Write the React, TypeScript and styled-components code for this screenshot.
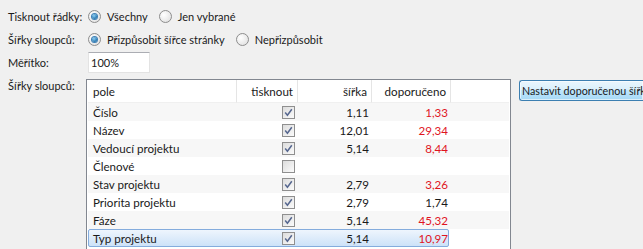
import React from "react";
import styled, { createGlobalStyle } from "styled-components";

const Global = createGlobalStyle`
  html, body { margin: 0; padding: 0; background: #f0f0f0; }
  body { font-family: Lato, "Noto Sans", sans-serif; font-size: 11.6px; color: #1a1a1a; overflow: hidden; }
`;

const Page = styled.div`
  padding: 5px 0 0 8px;
  width: 643px;
  height: 249px;
  box-sizing: border-box;
  overflow: hidden;
`;

const FormRow = styled.div<{ $h: number }>`
  display: grid;
  grid-template-columns: 80px 1fr;
  align-items: center;
  height: ${(p) => p.$h}px;
`;

const Label = styled.span`
  white-space: nowrap;
  font-size: 11px;
`;

const Options = styled.div`
  display: flex;
  align-items: center;
  gap: 11px;
  font-size: 11px;
`;

const RadioLabel = styled.label`
  display: flex;
  align-items: center;
  gap: 6px;
  white-space: nowrap;
`;

const RadioCircle = styled.span<{ $on?: boolean }>`
  width: 11px;
  height: 11px;
  border-radius: 50%;
  border: 1px solid #8d8d8d;
  background: radial-gradient(circle at 35% 35%, #ffffff, #dcdcdc);
  display: flex;
  align-items: center;
  justify-content: center;
  &::after {
    content: "";
    display: ${(p) => (p.$on ? "block" : "none")};
    width: 5px;
    height: 5px;
    border-radius: 50%;
    background: radial-gradient(circle at 40% 35%, #8fd0f5, #1c6ea8 75%);
    box-shadow: 0 0 0 1px #3d7fb6;
  }
`;

const Radio = ({ on, children }: { on?: boolean; children: React.ReactNode }) => (
  <RadioLabel>
    <RadioCircle $on={on} />
    {children}
  </RadioLabel>
);

const Input = styled.div`
  width: 58px;
  height: 19px;
  background: #fff;
  border: 1px solid #e3e3e3;
  border-top-color: #abadb3;
  box-sizing: content-box;
  display: flex;
  align-items: center;
  padding-left: 2px;
  font-size: 11px;
`;

const TableArea = styled.div`
  display: grid;
  grid-template-columns: 80px 423px 1fr;
  align-items: start;
  margin-top: 6px;
`;

const Table = styled.div`
  margin-left: -2px;
  border: 1px solid #828790;
  border-bottom: none;
  background: #fff;
  height: 200px;
  padding: 0 1px;
`;

const COLS = "149px 61px 74px 79px 1fr";

const HeadRow = styled.div`
  display: grid;
  grid-template-columns: ${COLS};
  height: 23px;
  background: #fff;
`;

const HeadCell = styled.div<{ $right?: boolean }>`
  border-right: 1px solid #e5e5e5;
  border-bottom: 1px solid #f0f0f0;
  display: flex;
  align-items: center;
  justify-content: ${(p) => (p.$right ? "flex-end" : "flex-start")};
  padding: 0 4px 0 5px;
  &:last-child { border-right: none; }
`;

const Row = styled.div<{ $alt?: boolean }>`
  display: grid;
  grid-template-columns: ${COLS};
  height: 18px;
  background: ${(p) => (p.$alt ? "#f7f7f7" : "#fff")};
  position: relative;
`;

const Selection = styled.div`
  position: absolute;
  left: 0;
  top: 0;
  bottom: 0;
  width: 361px;
  border: 1px solid #84acdd;
  border-radius: 2px;
  background: linear-gradient(#eef5fd, #cde2f8);
  box-sizing: border-box;
`;

const Cell = styled.div<{ $align?: "left" | "right"; $red?: boolean }>`
  position: relative;
  display: flex;
  align-items: center;
  justify-content: ${(p) => (p.$align === "right" ? "flex-end" : "flex-start")};
  padding: ${(p) => (p.$align === "right" ? "0 3px 0 0" : "0 0 0 5px")};
  color: ${(p) => (p.$red ? "#e0141e" : "#1a1a1a")};
  white-space: nowrap;
`;

const CheckBox = styled.span`
  width: 11px;
  height: 11px;
  border: 1px solid #8f8f8f;
  background: linear-gradient(135deg, #dcdcdc, #fbfbfb);
  display: flex;
  align-items: center;
  justify-content: center;
`;

const Check = ({ on }: { on: boolean }) => (
  <CheckBox>
    {on && (
      <svg width="9" height="9" viewBox="0 0 9 9">
        <path d="M1.2 4.6 L3.4 7.2 L7.8 1.2" fill="none" stroke="#56678f" strokeWidth="1.5" />
      </svg>
    )}
  </CheckBox>
);

const Button = styled.div`
  margin-left: 8px;
  margin-top: 1px;
  height: 19px;
  border: 1px solid #3c7fb1;
  border-right: none;
  border-radius: 3px 0 0 3px;
  background: linear-gradient(#eaf6fd 0%, #d9f0fc 45%, #bee6fd 50%, #a7d9f5 100%);
  box-shadow: inset 0 0 0 1px rgba(255,255,255,0.6);
  display: flex;
  align-items: center;
  padding-left: 2px;
  white-space: nowrap;
  overflow: hidden;
  font-size: 10.7px;
`;

const rows: { name: string; on: boolean; w?: string; r?: string; red?: boolean }[] = [
  { name: "Číslo", on: true, w: "1,11", r: "1,33", red: true },
  { name: "Název", on: true, w: "12,01", r: "29,34", red: true },
  { name: "Vedoucí projektu", on: true, w: "5,14", r: "8,44", red: true },
  { name: "Členové", on: false },
  { name: "Stav projektu", on: true, w: "2,79", r: "3,26", red: true },
  { name: "Priorita projektu", on: true, w: "2,79", r: "1,74", red: false },
  { name: "Fáze", on: true, w: "5,14", r: "45,32", red: true },
  { name: "Typ projektu", on: true, w: "5,14", r: "10,97", red: true },
];

export default function App() {
  return (
    <Page>
      <Global />
      <FormRow $h={23}>
        <Label>Tisknout řádky:</Label>
        <Options>
          <Radio on>Všechny</Radio>
          <Radio>Jen vybrané</Radio>
        </Options>
      </FormRow>
      <FormRow $h={23}>
        <Label>Šířky sloupců:</Label>
        <Options>
          <Radio on>Přizpůsobit šířce stránky</Radio>
          <Radio>Nepřizpůsobit</Radio>
        </Options>
      </FormRow>
      <FormRow $h={22}>
        <Label>Měřítko:</Label>
        <Input>100%</Input>
      </FormRow>
      <TableArea>
        <Label>Šířky sloupců:</Label>
        <Table>
          <HeadRow>
            <HeadCell>pole</HeadCell>
            <HeadCell $right>tisknout</HeadCell>
            <HeadCell $right>šířka</HeadCell>
            <HeadCell $right>doporučeno</HeadCell>
            <HeadCell />
          </HeadRow>
          {rows.map((r, i) => (
            <Row key={r.name} $alt={i % 2 === 0}>
              {i === rows.length - 1 && <Selection />}
              <Cell>{r.name}</Cell>
              <Cell $align="right">
                <Check on={r.on} />
              </Cell>
              <Cell $align="right">{r.w}</Cell>
              <Cell $align="right" $red={r.red}>{r.r}</Cell>
              <Cell />
            </Row>
          ))}
        </Table>
        <Button>Nastavit doporučenou šířku</Button>
      </TableArea>
    </Page>
  );
}
